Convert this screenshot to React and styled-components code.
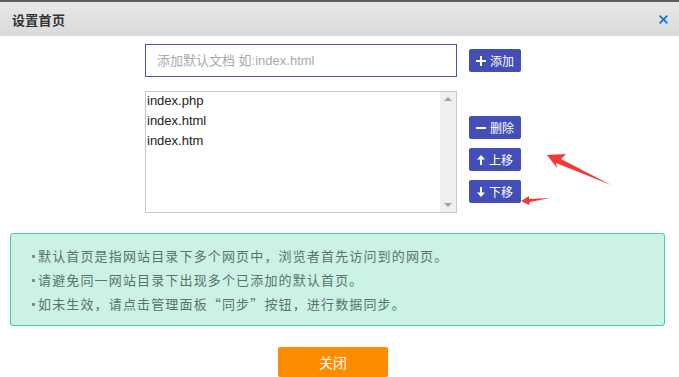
import styled, { createGlobalStyle } from "styled-components";

const GlobalStyle = createGlobalStyle`
  body {
    margin: 0;
    background: #fff;
    font-family: "Liberation Sans", "Noto Sans CJK SC", sans-serif;
  }
`;

const files = ["index.php", "index.html", "index.htm"];

const tips = [
  "默认首页是指网站目录下多个网页中，浏览者首先访问到的网页。",
  "请避免同一网站目录下出现多个已添加的默认首页。",
  "如未生效，请点击管理面板“同步”按钮，进行数据同步。",
];

const PlusIcon = () => (
  <svg width="10" height="10" viewBox="0 0 10 10">
    <path d="M4 0h2v4h4v2H6v4H4V6H0V4h4z" fill="#fff" />
  </svg>
);

const MinusIcon = () => (
  <svg width="10" height="10" viewBox="0 0 10 10">
    <rect x="0" y="4" width="10" height="2" fill="#fff" />
  </svg>
);

const ArrowIcon = ({ down }) => (
  <svg width="8" height="10" viewBox="0 0 8 10" style={down ? { transform: "rotate(180deg)" } : undefined}>
    <path d="M4 0L8 4.5H5V10H3V4.5H0z" fill="#fff" />
  </svg>
);

const App = () => {
  return (
    <Dialog>
      <GlobalStyle />
      <Header>
        <Title>设置首页</Title>
        <CloseX viewBox="0 0 10 10">
          <path d="M1.5 0L5 3.5 8.5 0 10 1.5 6.5 5 10 8.5 8.5 10 5 6.5 1.5 10 0 8.5 3.5 5 0 1.5z" fill="#1b78e0" />
        </CloseX>
      </Header>
      <Body>
        <Row>
          <Input placeholder="添加默认文档 如:index.html" />
          <ActionButton>
            <PlusIcon />
            添加
          </ActionButton>
        </Row>
        <ListRow>
          <ListBox>
            <Items>
              {files.map((f) => (
                <Item key={f}>{f}</Item>
              ))}
            </Items>
            <ScrollBar>
              <ScrollArrow />
              <ScrollArrow $down />
            </ScrollBar>
          </ListBox>
          <ButtonColumn>
            <ActionButton>
              <MinusIcon />
              删除
            </ActionButton>
            <ActionButton>
              <ArrowIcon />
              上移
            </ActionButton>
            <ActionButton>
              <ArrowIcon down />
              下移
            </ActionButton>
          </ButtonColumn>
        </ListRow>
        <TipBox>
          {tips.map((t) => (
            <TipLine key={t}>
              <Dot />
              {t}
            </TipLine>
          ))}
        </TipBox>
        <Footer>
          <CloseButton>关闭</CloseButton>
        </Footer>
      </Body>
      <Arrows viewBox="0 0 679 377">
        <polygon points="547,155 566,154 561,159 611,185 556,163 557,168" fill="#f23a35" />
        <polygon points="521,201 529,196 529,199 550,198 530,202 529,205" fill="#f23a35" />
      </Arrows>
    </Dialog>
  );
};

const Dialog = styled.div`
  position: relative;
  width: 679px;
  height: 377px;
  overflow: hidden;
  border-top: 2px solid #5f5f5f;
  box-sizing: border-box;
  background: #fff;
`;

const Header = styled.div`
  height: 34px;
  display: flex;
  align-items: center;
  justify-content: space-between;
  padding: 0 11px 0 12px;
  background: linear-gradient(#e8e8e8, #dadada);
`;

const Title = styled.div`
  font-family: "Noto Sans CJK SC", sans-serif;
  font-size: 13px;
  font-weight: bold;
  letter-spacing: 0.3px;
  color: #333;
`;

const CloseX = styled.svg`
  width: 9px;
  height: 9px;
`;

const Body = styled.div`
  padding-top: 8px;
`;

const Row = styled.div`
  display: flex;
  align-items: center;
  gap: 12px;
  margin-left: 145px;
`;

const Input = styled.input`
  width: 312px;
  height: 33px;
  box-sizing: border-box;
  border: 1px solid #4a52bd;
  padding: 0 11px;
  font-family: "Liberation Sans", "Noto Sans CJK SC", sans-serif;
  font-size: 13px;
  color: #333;
  outline: none;

  &::placeholder {
    color: #a9a9a9;
  }
`;

const ActionButton = styled.button`
  width: 52px;
  height: 23px;
  display: flex;
  align-items: center;
  justify-content: center;
  gap: 4px;
  padding: 0;
  border: none;
  border-radius: 2px;
  background: #434fb6;
  color: #fff;
  font-family: "Noto Sans CJK SC", sans-serif;
  font-size: 12px;
`;

const ListRow = styled.div`
  display: flex;
  gap: 12px;
  margin: 14px 0 0 145px;
`;

const ListBox = styled.div`
  width: 312px;
  height: 122px;
  box-sizing: border-box;
  border: 1px solid #c8c8c8;
  display: flex;
`;

const Items = styled.div`
  flex: 1;
  margin-top: -1px;
`;

const Item = styled.div`
  height: 20px;
  line-height: 20px;
  padding-left: 1px;
  font-size: 13px;
  color: #222;
`;

const ScrollBar = styled.div`
  width: 16px;
  background: #f0f0f0;
  display: flex;
  flex-direction: column;
  justify-content: space-between;
  align-items: center;
  padding: 5px 0;
`;

const ScrollArrow = styled.div`
  width: 0;
  height: 0;
  border-left: 4px solid transparent;
  border-right: 4px solid transparent;
  ${(p) => (p.$down ? "border-top: 4px solid #a3a3a3;" : "border-bottom: 4px solid #a3a3a3;")}
`;

const ButtonColumn = styled.div`
  display: flex;
  flex-direction: column;
  gap: 9px;
  padding-top: 25px;
`;

const TipBox = styled.div`
  margin: 20px 14px 0 10px;
  height: 93px;
  box-sizing: border-box;
  padding: 10px 0 0 21px;
  background: #ccf2e6;
  border: 1px solid #3fd0a5;
  border-radius: 3px;
`;

const TipLine = styled.div`
  height: 24px;
  line-height: 24px;
  display: flex;
  align-items: center;
  font-family: "Noto Sans CJK SC", sans-serif;
  font-size: 13px;
  letter-spacing: 1.15px;
  color: #557566;
`;

const Dot = styled.span`
  width: 3px;
  height: 3px;
  background: #7d8f86;
  margin-right: 3px;
`;

const Footer = styled.div`
  width: 666px;
  display: flex;
  justify-content: center;
  margin-top: 21px;
`;

const CloseButton = styled.button`
  width: 110px;
  height: 30px;
  border: none;
  border-radius: 2px;
  background: #ff8b00;
  color: #fff;
  font-family: "Noto Sans CJK SC", sans-serif;
  font-size: 14px;
`;

const Arrows = styled.svg`
  position: absolute;
  left: 0;
  top: -2px;
  width: 679px;
  height: 377px;
  pointer-events: none;
`;

export default App;
